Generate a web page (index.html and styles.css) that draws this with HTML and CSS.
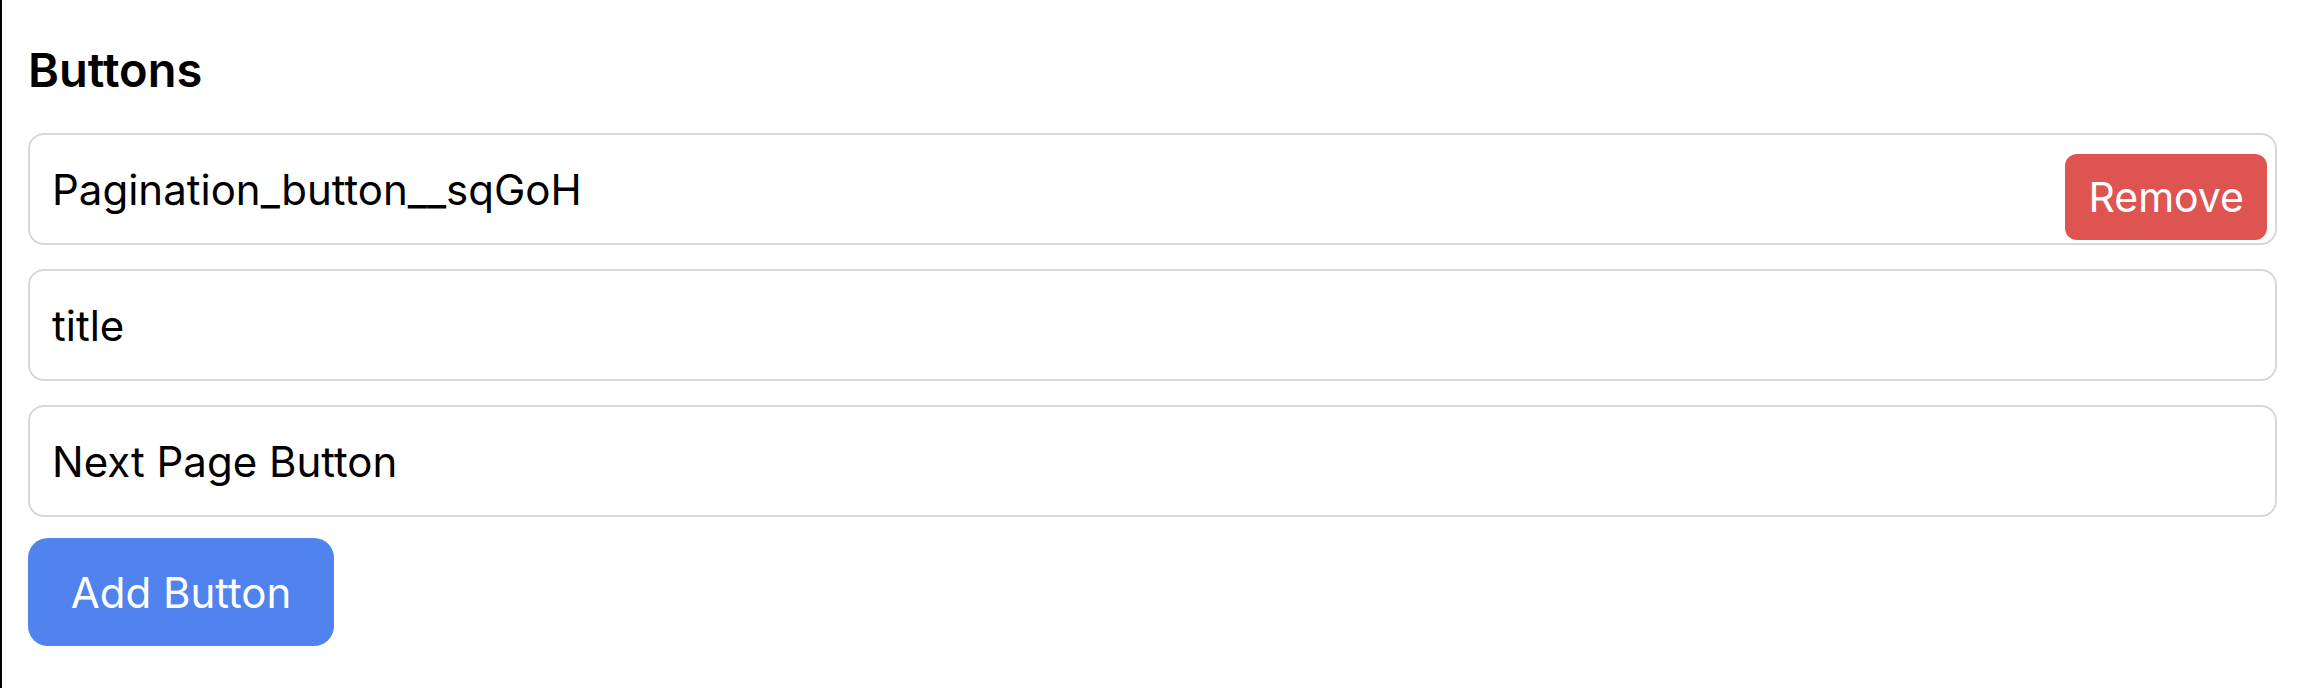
FILE: index.html
```html
<!DOCTYPE html>
<html lang="en">
<head>
<meta charset="utf-8">
<title>Buttons</title>
<link rel="stylesheet" href="styles.css">
</head>
<body>
<div class="page">
  <h2 class="title">Buttons</h2>
  <div class="list">
    <div class="field">
      <input class="text-input" type="text" value="Pagination_button__sqGoH" readonly>
      <button class="remove-btn" type="button">Remove</button>
    </div>
    <div class="field">
      <input class="text-input" type="text" value="title" readonly>
    </div>
    <div class="field">
      <input class="text-input" type="text" value="Next Page Button" readonly>
    </div>
  </div>
  <button class="add-btn" type="button">Add Button</button>
</div>
</body>
</html>
```

FILE: styles.css
```css
html, body {
  margin: 0;
  padding: 0;
  background: #ffffff;
}

.page {
  box-sizing: border-box;
  height: 688px;
  border-left: 2px solid #000000;
  padding: 44px 21px 0 26px;
  font-family: "Inter", "Noto Sans", "Liberation Sans", sans-serif;
  color: #000000;
  display: flex;
  flex-direction: column;
  align-items: stretch;
}

.title {
  margin: 0 0 37px 0;
  font-size: 47px;
  line-height: 52px;
  font-weight: 600;
}

.list {
  display: flex;
  flex-direction: column;
  gap: 24px;
}

.field {
  position: relative;
}

.text-input {
  display: block;
  box-sizing: border-box;
  width: 100%;
  height: 112px;
  margin: 0;
  padding: 0 0 0 22px;
  border: 2px solid #d5d7dc;
  border-radius: 16px;
  background: #ffffff;
  font-family: inherit;
  font-size: 42px;
  color: #000000;
  outline: none;
}

.remove-btn {
  position: absolute;
  top: 21px;
  right: 10px;
  box-sizing: border-box;
  height: 86px;
  padding: 0 23px;
  border: none;
  border-radius: 12px;
  background: #de5450;
  color: #ffffff;
  font-family: inherit;
  font-size: 41px;
  line-height: 86px;
}

.add-btn {
  align-self: flex-start;
  box-sizing: border-box;
  margin-top: 21px;
  width: 306px;
  height: 108px;
  padding: 0;
  border: none;
  border-radius: 20px;
  background: #5083ee;
  color: #ffffff;
  font-family: inherit;
  font-size: 42px;
}
```
